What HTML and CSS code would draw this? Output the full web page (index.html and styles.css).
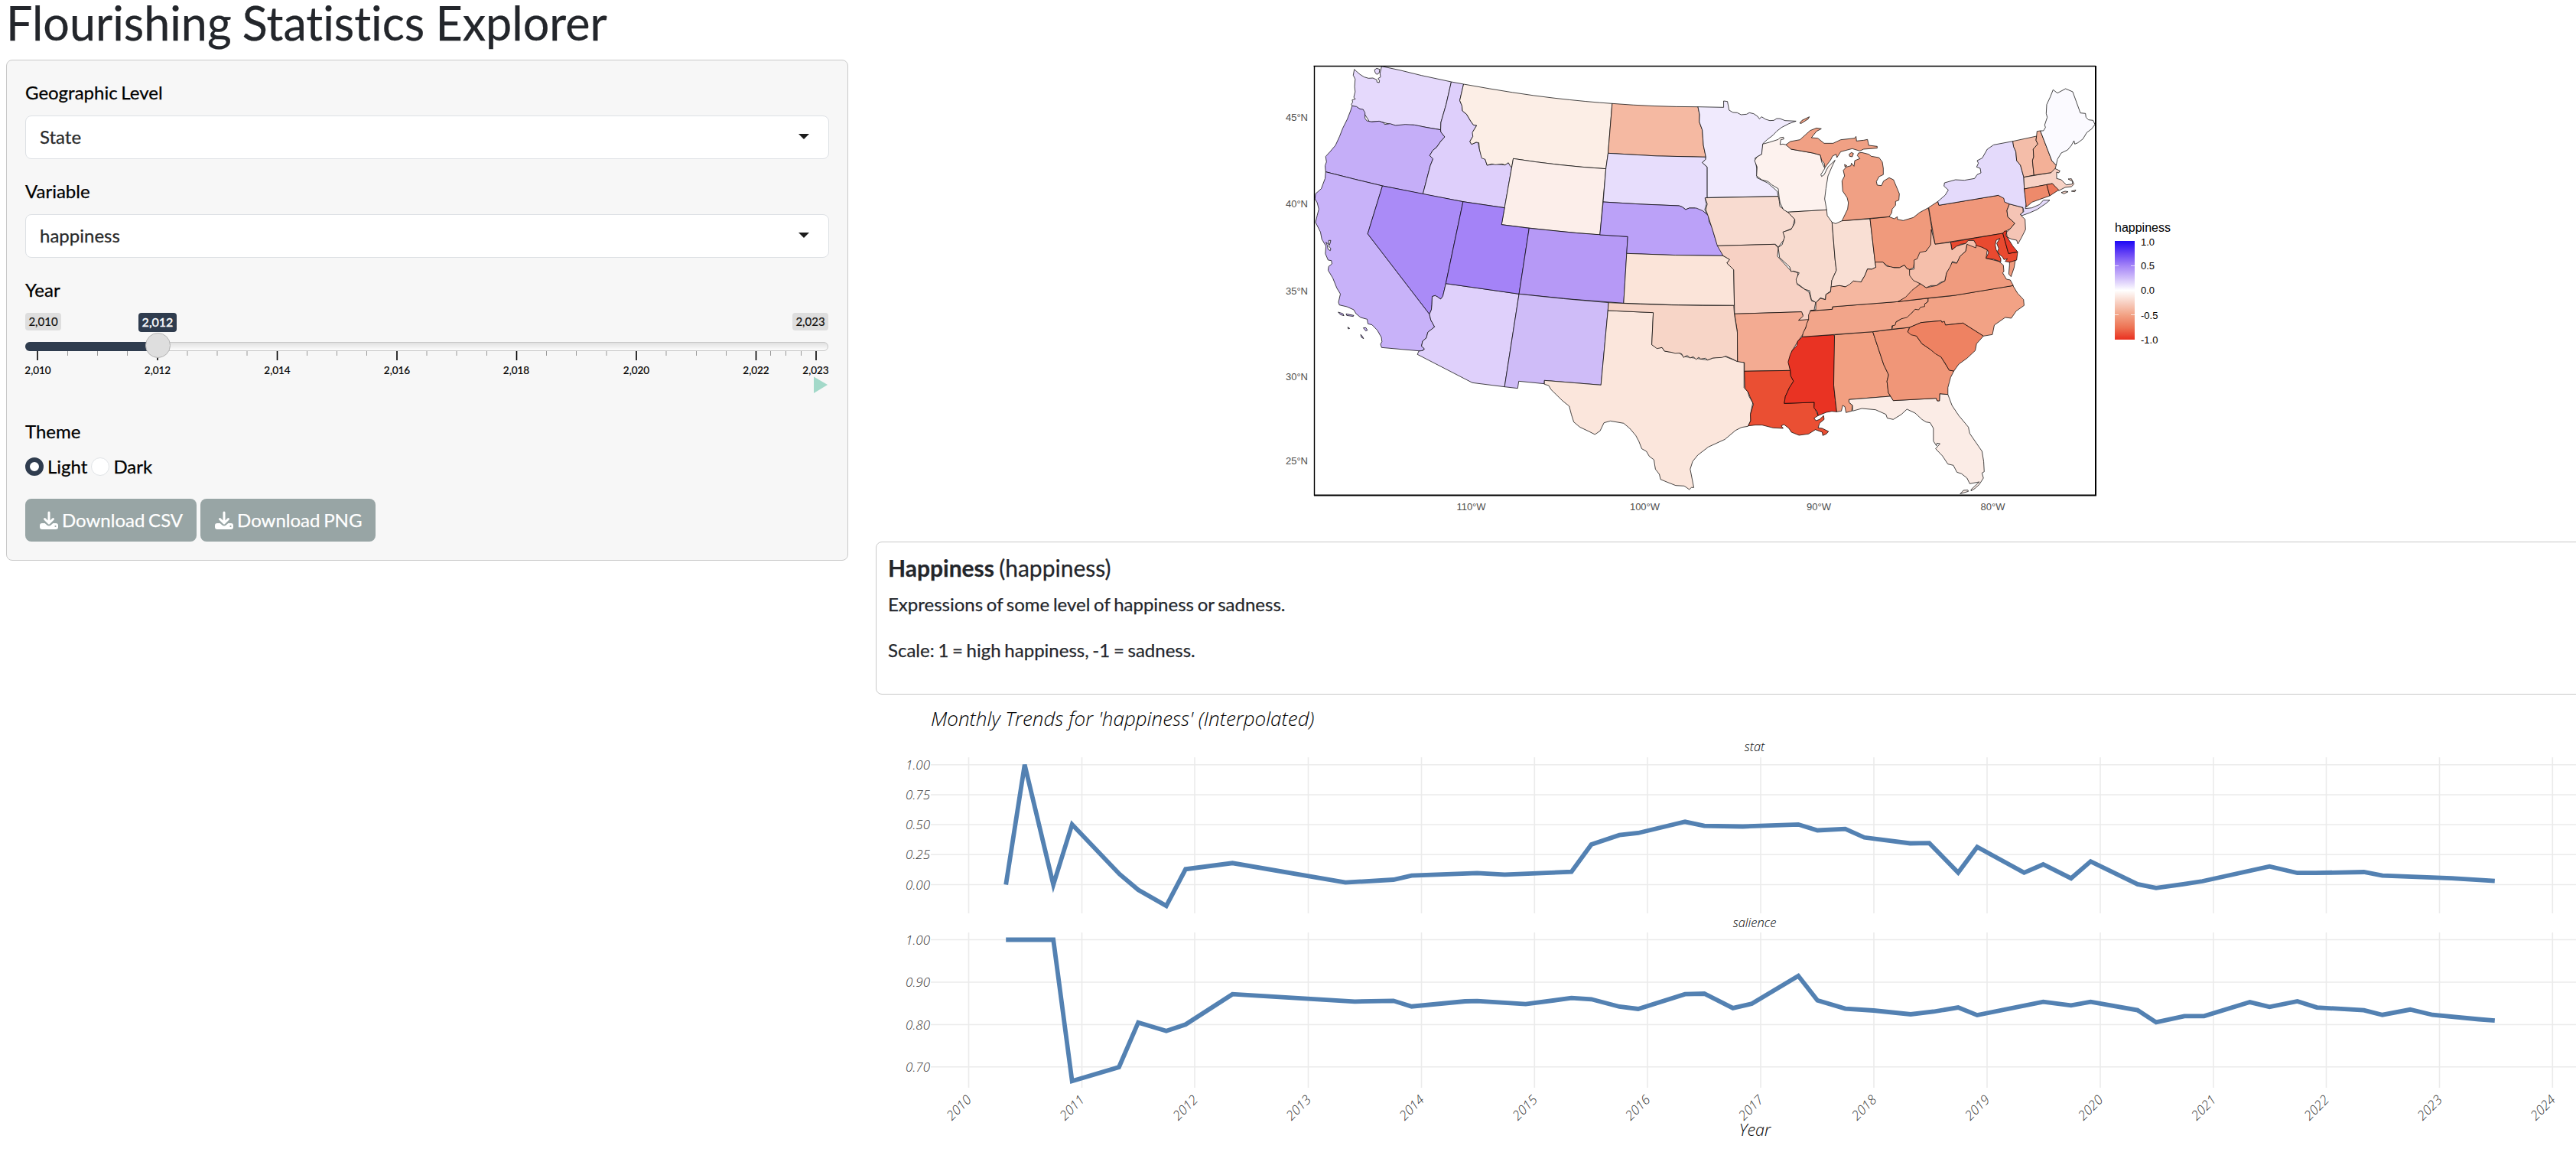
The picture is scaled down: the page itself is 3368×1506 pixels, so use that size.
FILE: index.html
```html
<!DOCTYPE html>
<html lang="en">
<head>
<meta charset="utf-8">
<title>Flourishing Statistics Explorer</title>
<link rel="stylesheet" href="styles.css">
</head>
<body>
<div class="page">
  <div class="side">
    <h1 class="title">Flourishing Statistics Explorer</h1>
    <form class="panel">
      <div class="label">Geographic Level</div>
      <div class="select"><span>State</span><i class="caret"></i></div>
      <div class="label">Variable</div>
      <div class="select"><span>happiness</span><i class="caret"></i></div>
      <div class="label">Year</div>
      <svg class="slider" viewBox="33 409 1050 108">
        <defs><linearGradient id="track" x2="0" y2="1"><stop offset="0" stop-color="#dedede"/><stop offset="1" stop-color="#fff"/></linearGradient></defs>
        <rect x="33.5" y="447.5" width="1049" height="11" rx="5.5" fill="url(#track)" stroke="#c6c6c6"/>
        <path d="M39 447H206V459H39A6 6 0 0 1 39 447Z" fill="#2f3c4e"/>
        <path class="minor" d="M88.500 459v6M127.500 459v6M166.500 459v6M245 459v6M284 459v6M323 459v6M401.500 459v6M440.500 459v6M479.500 459v6M558 459v6M597 459v6M636.500 459v6M714.500 459v6M753.500 459v6M793 459v6M871 459v6M910.500 459v6M949.500 459v6M1007.500 459v6M1027.500 459v6M1047.500 459v6"/>
        <path class="major" d="M49 459v12M206 459v12M362.500 459v12M519 459v12M675.500 459v12M832 459v12M988.500 459v12M1067 459v12"/>
        <circle cx="206.500" cy="451.500" r="16" fill="#dedede" stroke="#b4b4b4"/>
        <rect x="33" y="409" width="47" height="23" rx="4" fill="#dedede"/>
        <rect x="1036" y="409" width="47" height="23" rx="4" fill="#dedede"/>
        <rect x="181" y="409" width="50" height="25" rx="4" fill="#2f3c4e"/>
        <g class="tag"><text x="56.500" y="426">2,010</text><text x="1059.500" y="426">2,023</text><text class="now" x="206" y="427">2,012</text></g>
        <g class="tick"><text x="49.500" y="489">2,010</text><text x="206" y="489">2,012</text><text x="362.500" y="489">2,014</text><text x="519" y="489">2,016</text><text x="675" y="489">2,018</text><text x="832" y="489">2,020</text><text x="988.500" y="489">2,022</text><text x="1066.500" y="489">2,023</text></g>
        <path d="M1064 492.500L1082 503L1064 514Z" fill="#a3d9c9"/>
      </svg>
      <div class="label theme">Theme</div>
      <div class="radios"><i class="dot on"></i><span>Light</span><i class="dot"></i><span>Dark</span></div>
      <div class="buttons">
        <div class="btn"><svg viewBox="0 0 24 24"><path d="M12 2V15M6.500 10.500L12 16L17.500 10.500" fill="none" stroke="#fff" stroke-width="3" stroke-linecap="round" stroke-linejoin="round"/><path d="M3 16H6.600L9.500 18.500A4 4 0 0 0 14.500 18.500L17.400 16H21A3 3 0 0 1 24 19V21A3 3 0 0 1 21 24H3A3 3 0 0 1 0 21V19A3 3 0 0 1 3 16Z" fill="#fff"/><circle cx="20.500" cy="20" r="1.100" fill="#98a5a5"/></svg>Download CSV</div>
        <div class="btn"><svg viewBox="0 0 24 24"><path d="M12 2V15M6.500 10.500L12 16L17.500 10.500" fill="none" stroke="#fff" stroke-width="3" stroke-linecap="round" stroke-linejoin="round"/><path d="M3 16H6.600L9.500 18.500A4 4 0 0 0 14.500 18.500L17.400 16H21A3 3 0 0 1 24 19V21A3 3 0 0 1 21 24H3A3 3 0 0 1 0 21V19A3 3 0 0 1 3 16Z" fill="#fff"/><circle cx="20.500" cy="20" r="1.100" fill="#98a5a5"/></svg>Download PNG</div>
      </div>
    </form>
  </div>
  <div class="main">
    <svg class="map" viewBox="1145 0 2240 708">
      <defs><linearGradient id="scale" x2="0" y2="1"><stop offset="0" stop-color="#1c08f5"/><stop offset=".12" stop-color="#6340f5"/><stop offset=".25" stop-color="#a383f7"/><stop offset=".38" stop-color="#d2c0fa"/><stop offset=".5" stop-color="#fff"/><stop offset=".62" stop-color="#f8d2c5"/><stop offset=".75" stop-color="#f2a285"/><stop offset=".88" stop-color="#ed7253"/><stop offset="1" stop-color="#e93020"/></linearGradient>
      <clipPath id="frame"><rect x="1718" y="86" width="1022" height="561"/></clipPath></defs>
      <g clip-path="url(#frame)"><g class="states" transform="translate(1680 70) scale(.35714 .33333)">
        <path fill="#e5d9fc" d="M254 62L262 70L275 82L290 92L306 97L322 96L336 103L337 112L345 114L346 106L341 98L350 92L348 78L354 50L420 65L500 86L609 111L590 200L571 270L570 299L520 290L470 280L405 283L345 266L310 268L293 240L283 222L270 215L246 205L243 200L248 190L246 182L258 178L252 172L257 150L255 130L257 100L250 85Z"/>
        <path fill="#e5d9fc" d="M328 64L336 58L347 62L345 76L336 82L330 74Z"/>
        <path fill="#c5aef8" d="M246 205L262 208L274 217L286 219L293 232L293 254L300 264L318 268L345 265L362 272L365 278L385 275L405 282L440 278L475 280L515 289L570 299L571 308L585 327L570 345L555 368L541 380L530 400L542 413L532 440L505 551L357 519L256 493L149 464L147 440L152 425L149 404L165 385L185 360L200 325L212 292L228 258L240 225Z"/>
        <path fill="#decffb" d="M609 111L654 120L640 184L648 205L650 225L665 238L680 265L690 280L702 282L690 303L688 325L677 345L683 356L706 346L712 375L720 405L733 415L740 438L770 433L806 437L818 428L830 447L804 605L652 581L505 551L532 440L542 413L530 400L541 380L555 368L570 345L585 327L571 308L570 299L571 270L590 200Z"/>
        <path fill="#fceee6" d="M654 120Q850 158 980 174T1198 196L1183 391L1175 452Q1000 440 836 412L830 447L824 440L818 428L806 437L795 433L770 436L758 433L740 438L733 415L720 410L712 375L710 350L700 348L683 356L677 345L688 325L686 310L702 282L690 280L680 265L665 238L650 225L648 205L640 184Z"/>
        <path fill="#fceeea" d="M836 412Q1000 440 1175 452L1153 711Q980 697 793 671Z"/>
        <path fill="#c8b2f9" d="M149 464L256 493L357 519L303 707L529 1022L534 1045L548 1072L523 1093L518 1115L504 1128L500 1148L511 1158L500 1167L354 1153L350 1140L355 1130L353 1113L338 1085L319 1064L304 1060L301 1042L277 1035L260 1020L252 1005L227 993L199 986L196 975L203 943L190 920L175 880L158 850L160 835L172 825L170 812L158 810L148 785L150 755L135 728L130 700L112 662L118 635L124 610L118 585L110 570L112 550L133 530L140 510L147 490Z"/>
        <path fill="#fff" d="M150 740L162 750L160 733L168 733L165 745L160 755L168 765L166 773L158 768L155 752Z"/>
        <path fill="#c8b2f9" d="M195 1014L212 1020L216 1028L203 1024ZM224 1021L252 1027L250 1031L226 1027ZM230 1073l7 5l-5 2zM287 1076L296 1075L302 1085L296 1088ZM277 1102L283 1108L288 1118L280 1113Z"/>
        <path fill="#aa8bf7" d="M357 519L652 581L589 902L578 952L570 963L558 954L550 949L539 953L538 985L536 1005L529 1022L303 707Z"/>
        <path fill="#dfd0fb" d="M589 902L857 943L804 1307L686 1291L485 1180L490 1167L505 1165L511 1158L500 1148L504 1128L518 1115L523 1093L548 1072L534 1045L529 1022L536 1005L538 985L539 953L550 949L558 954L570 963L578 952Z"/>
        <path fill="#a483f7" d="M652 581L804 605L793 671L894 685L857 943L589 902Z"/>
        <path fill="#b699f6" d="M894 685Q1070 707 1255 718L1240 979Q1050 966 857 943Z"/>
        <path fill="#cfbcf8" d="M857 943Q1020 963 1185 977L1157 1300L950 1282L949 1295L856 1285L852 1313L804 1307Z"/>
        <path fill="#f5b9a2" d="M1198 196Q1350 209 1512 209L1518 240L1517 268L1528 300L1532 360L1541 406Q1360 405 1183 391Z"/>
        <path fill="#e7ddfc" d="M1183 391Q1360 405 1541 406L1540 415L1528 428L1546 445L1546 565L1538 568L1543 590L1537 612L1545 632L1530 620L1500 606L1480 606L1467 612L1455 602L1443 597Q1300 592 1165 582L1175 452Z"/>
        <path fill="#bba1f8" d="M1165 582Q1300 592 1443 597L1455 602L1467 612L1480 606L1506 606L1530 617L1550 635L1553 660L1563 680L1578 735L1595 770L1604 793Q1430 793 1251 784L1255 718L1153 711Z"/>
        <path fill="#fbe4d9" d="M1251 784Q1430 793 1604 793L1616 800L1628 808L1618 822L1643 848L1645 988Q1440 989 1240 979Z"/>
        <path fill="#f0eafd" d="M1512 209L1606 211L1606 186L1620 188L1626 222L1640 231L1656 232L1670 240L1690 238L1700 232L1716 236L1730 246L1737 256L1745 248L1760 258L1775 263L1790 262L1800 255L1812 255L1831 263L1871 265L1845 275L1818 290L1800 305L1787 320L1765 338L1750 353L1746 395L1721 410L1727 450L1728 487L1768 508L1802 540L1806 560L1546 565L1546 445L1528 428L1540 415L1541 406L1532 360L1528 300L1517 268L1518 240Z"/>
        <path fill="#f8dbd0" d="M1538 566L1806 560L1810 580L1812 600L1841 622L1866 650L1858 685L1825 700L1830 725L1806 760L1796 748L1583 754L1568 700L1550 640L1541 612L1546 590Z"/>
        <path fill="#f7d1c4" d="M1583 754L1793 748L1806 762L1803 795L1850 850L1878 860L1875 905L1918 935L1928 970L1943 975L1937 1008L1925 1008L1918 1045L1881 1046L1896 1025L1890 1013L1646 1021L1643 848L1618 822L1628 808L1616 800L1604 793Z"/>
        <path fill="#f3ab92" d="M1646 1021L1892 1013L1897 1030L1880 1046L1917 1043L1910 1065L1897 1100L1877 1130L1857 1165L1844 1210L1850 1243L1682 1246L1682 1212L1657 1210L1656 1090Z"/>
        <g transform="translate(0 810) scale(1.10714 1)">
          <path fill="#fbe6dc" d="M1068 198L1218 206L1213 332L1230 345L1247 343L1255 357L1280 362L1305 365L1318 378L1358 385L1398 392L1415 384L1455 378L1497 398L1518 402L1518 500L1530 515L1535 535L1547 560L1540 600L1540 630L1531 652L1510 656L1490 668L1455 703L1400 733L1365 765L1348 790L1340 820L1352 892L1344 892L1337 900L1328 892L1320 886L1292 884L1262 870L1242 860L1238 840L1225 820L1220 783L1205 770L1195 750L1180 740L1170 710L1160 688L1140 660L1120 640L1076 631L1055 638L1042 670L1025 684L1005 672L975 655L955 635L947 605L940 573L918 552L880 508L872 492L858 487L858 472L1045 490Z"/>
          <path fill="#f7d5c7" d="M1070 167Q1280 180 1484 178L1486 212L1496 285L1496 398L1480 388L1458 377L1445 382L1415 384L1398 392L1390 385L1375 388L1368 381L1360 390L1350 379L1340 384L1330 374L1318 382L1312 368L1305 365L1290 366L1280 362L1255 357L1247 343L1230 347L1213 332L1218 206L1068 198Z"/>
        </g>
        <g transform="translate(1512 870)">
          <path fill="#ea4f33" d="M170 376L338 373L340 395L350 415L335 440L320 475L316 502L426 498L425 515L440 550L425 560L432 570L445 565L460 550L462 565L445 580L440 598L455 600L478 612L470 622L457 628L455 615L430 605L405 622L370 627L342 615L333 600L315 585L305 590L312 600L275 598L235 587L210 587L184 590L193 570L192 545L203 505L190 475L185 460L172 443Z"/>
          <path fill="#e93323" d="M382 241L497 233L500 240L500 300L497 430L503 490L508 535L490 533L470 537L440 550L437 535L425 520L426 498L316 502L320 475L335 440L350 415L340 395L338 373L330 340L338 310L345 295L362 275L365 258Z"/>
          <path fill="#f29f81" d="M500 233L640 221L680 350L698 390L692 415L697 460L705 474L553 487L553 498L566 510L563 532L542 538L538 515L530 510L525 532L508 535L503 490L497 430Z"/>
          <path fill="#fbece6" d="M553 487L705 474L715 491L872 482L876 492L884 492L885 464L915 467L930 510L955 550L990 595L995 620L1040 690L1046 730L1048 770L1040 775L1045 795L1030 820L1015 835L1000 845L1000 840L1030 810L995 817L985 795L965 778L948 772L935 745L915 740L895 708L870 680L886 660L875 658L873 668L862 650L862 600L850 578L835 575L820 565L795 540L765 525L745 545L715 565L693 560L688 545L650 527L600 522L566 532L566 510L553 498ZM960 857L972 843L988 842L990 847L962 856Z"/>
          <path fill="#f09678" d="M640 221L775 204L768 222L800 238L820 268L850 290L890 320L920 372L937 375L925 400L915 440L915 467L885 464L884 492L876 492L872 482L715 491L705 474L697 460L692 415L698 390L680 350Z"/>
          <path fill="#f2a285" d="M842 90L930 80L1153 40L1170 70L1192 95L1194 118L1165 140L1147 168L1125 165L1085 195L1078 232L1045 238L970 187L906 195L890 178L817 185L775 204L710 211L715 190L745 170L780 150L800 125L815 125L830 112L842 103Z"/>
          <path fill="#ee8262" d="M775 204L817 185L890 178L893 184L902 180L906 195L970 187L1045 238L1020 268L1015 295L985 325L955 348L937 375L920 372L905 345L890 320L870 308L850 290L820 268L800 238L780 233L768 222Z"/>
          <path fill="#f2a58a" d="M842 90L842 103L830 112L830 122L815 125L808 135L795 133L780 150L765 165L745 170L725 182L722 195L710 198L710 211L640 221L382 241L385 225L395 205L398 190L405 173L405 155L412 139L492 133L493 123L733 103Z"/>
        </g>
        <g transform="translate(1652 240) scale(.93333 1)">
          <path fill="#fdf2ee" d="M104 115L130 108L165 97L172 90L185 88L187 95L175 98L172 117L183 115L205 120L215 135L300 150L330 158L335 185L345 205L348 210L332 235L335 242L345 235L360 205L388 178L375 205L360 240L352 290L347 330L355 373L202 382L185 372L172 345L168 320L165 290L140 275L125 262L100 255L80 240L82 205L72 180L82 165L100 155Z"/>
          <path fill="#f8dbcf" d="M202 382L355 373L357 395L376 422L388 570L393 610L375 650L372 690L352 705L350 725L330 718L313 737L295 725L288 690L270 685L237 660L235 645L247 620L225 613L215 615L210 597L170 560L165 520L180 510L190 480L183 460L215 450L230 425L230 410Z"/>
          <path fill="#f9dfd4" d="M376 422L390 427L415 416L525 408L545 580L548 598L532 606L515 605L505 630L490 655L480 658L460 652L445 668L430 675L405 670L372 677L375 650L393 610L388 570Z"/>
          <path fill="#f09a7c" d="M525 408L600 400L620 408L632 400L632 410L655 415L695 403L720 383L754 365L768 450L768 510L740 538L720 545L716 570L700 570L695 600L680 607L670 604L660 590L640 600L605 598L590 590L575 578L545 580Z"/>
          <path fill="#f5b7a0" d="M313 737L330 720L350 725L352 705L370 695L372 675L405 670L428 675L445 665L460 652L490 656L505 630L515 605L532 606L548 598L545 578L575 578L590 594L605 596L620 600L640 600L660 590L670 604L680 607L683 630L700 650L722 663L690 695L680 710L665 718L635 733L378 753L376 763L290 769L312 765Z"/>
          <path fill="#f0a084" d="M195 118L212 105L250 98L290 62L315 52L334 55L315 65L295 90L320 92L345 112L380 112L410 98L465 92L470 85L472 103L500 100L515 97L520 120L553 124L553 131L500 135L485 142L455 133L410 145L395 168L392 155L378 162L370 178L348 207L345 190L335 178L330 158L300 150L215 135Z"/>
          <path fill="#f0a084" d="M480 150L492 148L520 155L530 163L560 168L573 185L577 210L577 235L560 243L550 262L553 276L570 278L578 260L600 247L617 255L640 310L638 335L625 340L625 355L612 370L610 385L600 400L415 416L437 370L440 345L435 325L418 300L415 260L425 240L420 218L432 205L450 200L452 190L462 202L465 180L485 172L475 160ZM443 155L452 148L460 152L455 165L445 163ZM425 195L434 200L427 205Z"/>
          <path fill="#f0a084" d="M249 33L258 22L287 8L282 17L255 34Z"/>
        </g>
        <g transform="translate(2268 120) scale(.93333 1)">
          <path fill="#f09b7e" d="M-25 853L5 835L30 808L63 783L85 798L125 790L158 772L165 740L185 700L205 702L218 675L240 655L245 628L270 620L325 650L320 683L350 690L370 695L388 710L390 735L385 740L400 765L415 768L427 790L200 828L92 839ZM412 697L435 690L430 720L418 755L409 745L412 710Z"/>
          <path fill="#f0977a" d="M95 484L110 474L131 460L135 475L368 436L390 445L395 462L412 470L402 495L405 520L433 546L415 567L400 575L386 585L120 628Z"/>
          <path fill="#e94a30" d="M181 620L386 585L408 664L444 658L440 690L412 698L395 695L404 685L390 688L385 678L372 668L365 655L370 645L362 625L374 605L360 612L356 630L360 650L378 685L378 697L350 687L320 683L330 660L325 650L305 640L280 632L272 613L250 615L240 625L220 628L186 650Z"/>
          <path fill="#f5bfab" d="M105 570L120 628L181 620L186 650L205 635L240 625L250 613L272 613L281 628L280 642L245 628L240 655L218 675L205 702L188 695L180 715L165 740L158 772L140 778L125 790L105 790L85 798L63 783L35 770L20 750L20 728L38 725L38 690L50 685L60 660L85 655L103 630Z"/>
          <path fill="#e93a27" d="M386 585L393 576L402 577L398 592L425 635L444 658L408 664Z"/>
          <path fill="#f5c4b5" d="M412 470L465 484L465 505L455 510L460 518L473 530L475 570L460 600L445 627L440 612L420 608L403 600L400 582L415 567L433 546L405 520L402 495Z"/>
          <path fill="#e4dafb" d="M131 460L160 435L172 415L155 400L157 387L200 375L235 377L275 370L285 355L300 348L297 330L283 325L290 310L285 300L305 290L325 255L350 238L425 224L428 245L437 265L440 300L455 318L468 365L470 411L478 470L474 488L500 485L530 472L545 455L570 455L555 468L520 492L490 505L460 516L455 510L468 500L465 484L412 470L392 462L390 448L368 436L135 475Z"/>
          <path fill="#f4bda9" d="M425 224L518 204L516 220L523 235L505 255L507 285L502 300L508 357L468 365L455 318L440 300L437 265L428 245Z"/>
          <path fill="#f7d2c5" d="M468 365L575 347L588 330L610 340L605 348L597 345L597 370L615 375L635 395L658 392L660 382L642 372L655 371L665 392L655 402L630 405L605 418L580 390L470 411ZM615 425L630 420L642 422L625 430ZM655 420L672 415L668 422Z"/>
          <path fill="#f3b097" d="M518 204L520 185L533 183L578 300L595 318L592 330L575 347L508 357L502 300L507 285L505 255L523 235L516 220Z"/>
          <path fill="#fbfaff" d="M533 183L545 183L553 170L550 160L560 130L556 115L558 80L572 50L583 22L600 35L632 18L660 30L690 113L710 115L712 130L722 140L740 142L747 158L735 175L715 190L700 215L680 230L668 235L665 222L655 240L640 258L615 270L600 295L595 318L578 300Z"/>
          <path fill="#ee8a6b" d="M470 411L558 394L570 438L530 452L500 463L478 482Z"/>
          <path fill="#ec7759" d="M558 394L580 390L605 415L585 428L570 438Z"/>
        </g>
      </g></g>
      <path d="M1717.500 86.500H2740M1718.500 86V648" stroke="#000" stroke-width="1.400" fill="none"/>
      <path d="M1718 647.500H2741M2740 86V648.500" stroke="#000" stroke-width="2" fill="none"/>
      <g class="axis end"><text x="1710" y="157.500">45°N</text><text x="1710" y="270.500">40°N</text><text x="1710" y="385">35°N</text><text x="1710" y="496.500">30°N</text><text x="1710" y="606.500">25°N</text></g>
      <g class="axis mid"><text x="1923.500" y="666.500">110°W</text><text x="2150.500" y="666.500">100°W</text><text x="2378" y="666.500">90°W</text><text x="2605.500" y="666.500">80°W</text></g>
      <text class="key" x="2765" y="303">happiness</text>
      <rect x="2765" y="315" width="26" height="129" fill="url(#scale)"/>
      <path d="M2765 347.500h5M2786 347.500h5M2765 411.500h5M2786 411.500h5" stroke="#fff" stroke-opacity=".7"/>
      <g class="axis dark"><text x="2799" y="320.500">1.0</text><text x="2799" y="352">0.5</text><text x="2799" y="384">0.0</text><text x="2799" y="416.500">-0.5</text><text x="2799" y="448.500">-1.0</text></g>
    </svg>
    <section class="card">
      <h4><b>Happiness</b> (happiness)</h4>
      <p>Expressions of some level of happiness or sadness.</p>
      <p>Scale: 1 = high happiness, -1 = sadness.</p>
    </section>
    <svg class="trend" viewBox="1145 908 2240 598">
      <text class="head" x="1217" y="949">Monthly Trends for 'happiness' (Interpolated)</text>
      <path class="grid" d="M1217 999.700H3372M1217 1039H3372M1217 1078H3372M1217 1117.300H3372M1217 1156.500H3372M1217 1228.500H3372M1217 1284H3372M1217 1339.500H3372M1217 1394.800H3372"/>
      <path class="grid" d="M1266.500 990V1194M1414.500 990V1194M1562 990V1194M1710.500 990V1194M1858.500 990V1194M2006.300 990V1194M2154 990V1194M2302 990V1194M2450 990V1194M2598 990V1194M2746 990V1194M2894 990V1194M3041.500 990V1194M3189.500 990V1194M3337.300 990V1194M1266.500 1219V1422M1414.500 1219V1422M1562 1219V1422M1710.500 1219V1422M1858.500 1219V1422M2006.300 1219V1422M2154 1219V1422M2302 1219V1422M2450 1219V1422M2598 1219V1422M2746 1219V1422M2894 1219V1422M3041.500 1219V1422M3189.500 1219V1422M3337.300 1219V1422"/>
      <polyline class="line" points="1315.200,1156.500 1339.700,999.700 1377.200,1156.500 1401.700,1077.700 1463.700,1142.700 1488.200,1163.300 1524.900,1184.300 1550.100,1136.300 1611.400,1128.300 1759.100,1153.700 1821.800,1150 1845.600,1144.700 1931.400,1141.300 1967.400,1143.300 2054.600,1139.700 2080.600,1104 2117.300,1091.700 2141.800,1089 2203.100,1074.300 2228.300,1079.700 2278.500,1080.500 2351.200,1077.800 2376.200,1085.500 2412.600,1083.600 2437.500,1094.800 2497.400,1102.500 2522.400,1102.200 2560.200,1140.800 2585.100,1107.200 2646.400,1140.800 2671.400,1130 2707.800,1148.200 2733.400,1126.100 2794.700,1155.900 2819,1160.900 2854.600,1155.900 2879.600,1152 2967.300,1132.700 3003.700,1141.200 3027.200,1141.200 3090.700,1140 3114.900,1144.700 3205.400,1148.200 3261.800,1151.600"/>
      <polyline class="line" points="1315.200,1228.500 1377.200,1228.500 1401.700,1413.300 1463,1395 1488.200,1336.700 1524.900,1347.700 1550.100,1339.300 1611.400,1299.700 1771.400,1309.300 1821.800,1308.300 1845.600,1315.700 1915.500,1309 1931.400,1308.700 1994.800,1312.700 2054.600,1304.700 2080.600,1306.300 2117.300,1316 2141.800,1319 2203.100,1299.700 2228.300,1299 2265.700,1317.900 2290.600,1312.100 2351.200,1275.700 2376.200,1307.800 2412.600,1318.600 2449.600,1321 2498.100,1326 2528,1322.500 2560.200,1317.100 2585.100,1327.100 2671.400,1309.700 2707.800,1314.400 2733.400,1309.700 2794.700,1320.600 2819,1336.400 2856,1328.300 2881.700,1328.300 2941.600,1310.100 2967.300,1316.300 3003.700,1309 3029.300,1317.100 3090.700,1320.600 3114.900,1326.700 3151.200,1319.800 3180.500,1326.700 3241,1332.500 3261.800,1334.100"/>
      <g class="val"><text x="1216" y="1006">1.00</text><text x="1216" y="1045.300">0.75</text><text x="1216" y="1084">0.50</text><text x="1216" y="1123.300">0.25</text><text x="1216" y="1162.600">0.00</text><text x="1216" y="1235">1.00</text><text x="1216" y="1290.300">0.90</text><text x="1216" y="1346">0.80</text><text x="1216" y="1401">0.70</text></g>
      <g class="val">
        <text transform="translate(1271 1439) rotate(-45)">2010</text><text transform="translate(1419 1439) rotate(-45)">2011</text><text transform="translate(1567 1439) rotate(-45)">2012</text><text transform="translate(1715 1439) rotate(-45)">2013</text><text transform="translate(1863 1439) rotate(-45)">2014</text><text transform="translate(2011 1439) rotate(-45)">2015</text><text transform="translate(2158.500 1439) rotate(-45)">2016</text><text transform="translate(2306.500 1439) rotate(-45)">2017</text><text transform="translate(2454.500 1439) rotate(-45)">2018</text><text transform="translate(2602.500 1439) rotate(-45)">2019</text><text transform="translate(2750.500 1439) rotate(-45)">2020</text><text transform="translate(2898.500 1439) rotate(-45)">2021</text><text transform="translate(3046 1439) rotate(-45)">2022</text><text transform="translate(3194 1439) rotate(-45)">2023</text><text transform="translate(3342 1439) rotate(-45)">2024</text>
      </g>
      <g class="strip"><text x="2294" y="982">stat</text><text x="2294" y="1212">salience</text></g>
      <text class="xname" x="2294.500" y="1485">Year</text>
    </svg>
  </div>
</div>
</body>
</html>
```
FILE: styles.css
```css
* { box-sizing: border-box; }
body {
  margin: 0;
  width: 3368px;
  height: 1506px;
  overflow: hidden;
  background: #fff;
  color: #23262b;
  font: 24px/36px Lato, sans-serif;
  font-variant-ligatures: none;
  word-spacing: -.06em;
  -webkit-text-stroke: .25px currentColor;
}
svg { -webkit-text-stroke: 0; word-spacing: 0; }
.page { display: flex; gap: 36px; padding-left: 8px; }
.side { flex: 0 0 1101px; }
.title { margin: 0 0 18px; font-size: 61px; line-height: 60px; font-weight: 400; white-space: nowrap; }
.panel {
  padding: 24px;
  border: 1px solid #c9c9c9;
  border-radius: 8px;
  background: #f7f7f7;
  color: #000;
}
.label { margin-bottom: 12px; }
.select {
  display: flex;
  justify-content: space-between;
  align-items: center;
  height: 57px;
  margin-bottom: 24px;
  padding: 0 25px 2px 18px;
  border: 1px solid #dde0e4;
  border-radius: 8px;
  background: #fff;
  color: #2a2a2a;
}
.caret { border: 7px solid transparent; border-top-color: #1c1c1c; border-bottom: 0; }
.slider { display: block; width: 1050px; height: 108px; overflow: visible; }
.minor { stroke: #999; stroke-width: 1; }
.major { stroke: #000; stroke-width: 1.6; }
.tag { font-size: 15px; text-anchor: middle; fill: #111; stroke: #111; stroke-width: .2; }
.tag .now { font-size: 16px; fill: #fff; stroke: #fff; stroke-width: .4; }
.tick { font-size: 13.5px; text-anchor: middle; fill: #000; stroke: #000; stroke-width: .2; }
.theme { margin: 29px 0 1px; }
.radios { display: flex; align-items: center; height: 54px; }
.radios span { margin: 0 5px; }
.dot { width: 24px; height: 24px; border: 1px solid #e0e3e6; border-radius: 50%; background: #fff; }
.dot.on { border: 6px solid #2f3c4e; }
.buttons { display: flex; gap: 5px; margin-top: 15px; }
.btn {
  display: flex;
  align-items: center;
  gap: 5px;
  height: 56px;
  padding: 0 18px 0 19px;
  border-radius: 8px;
  background: #98a5a5;
  color: #fff;
  white-space: nowrap;
}
.btn svg { width: 24px; height: 24px; }
.main { flex: 0 0 2240px; }
.map { display: block; width: 2240px; height: 708px; }
.states path { stroke: #000; stroke-opacity: .72; stroke-width: 1px; stroke-linejoin: round; vector-effect: non-scaling-stroke; }
.axis { font: 13px "Liberation Sans", Arial, sans-serif; fill: #4d4d4d; }
.end { text-anchor: end; }
.mid { text-anchor: middle; }
.dark { fill: #000; }
.key { font: 16px "Liberation Sans", Arial, sans-serif; fill: #000; }
.card { height: 200px; padding: 15px; border: 1px solid #c9c9c9; border-radius: 8px; }
.card h4 { margin: 0 0 12px; font-size: 30px; line-height: 36px; font-weight: 400; }
.card p { margin: 0 0 24px; }
.trend { display: block; width: 2240px; height: 598px; font-family: "Open Sans", sans-serif; font-style: italic; font-weight: 300; }
.head { font-size: 26px; fill: #000; }
.grid { stroke: #ebebeb; stroke-width: 1.6; fill: none; }
.line { stroke: #5381b2; stroke-width: 5.8; fill: none; stroke-miterlimit: 4; }
.val { font-size: 17px; fill: #333; text-anchor: end; }
.strip { font-size: 16.5px; fill: #000; text-anchor: middle; }
.xname { font-size: 21.5px; fill: #000; text-anchor: middle; }
```
